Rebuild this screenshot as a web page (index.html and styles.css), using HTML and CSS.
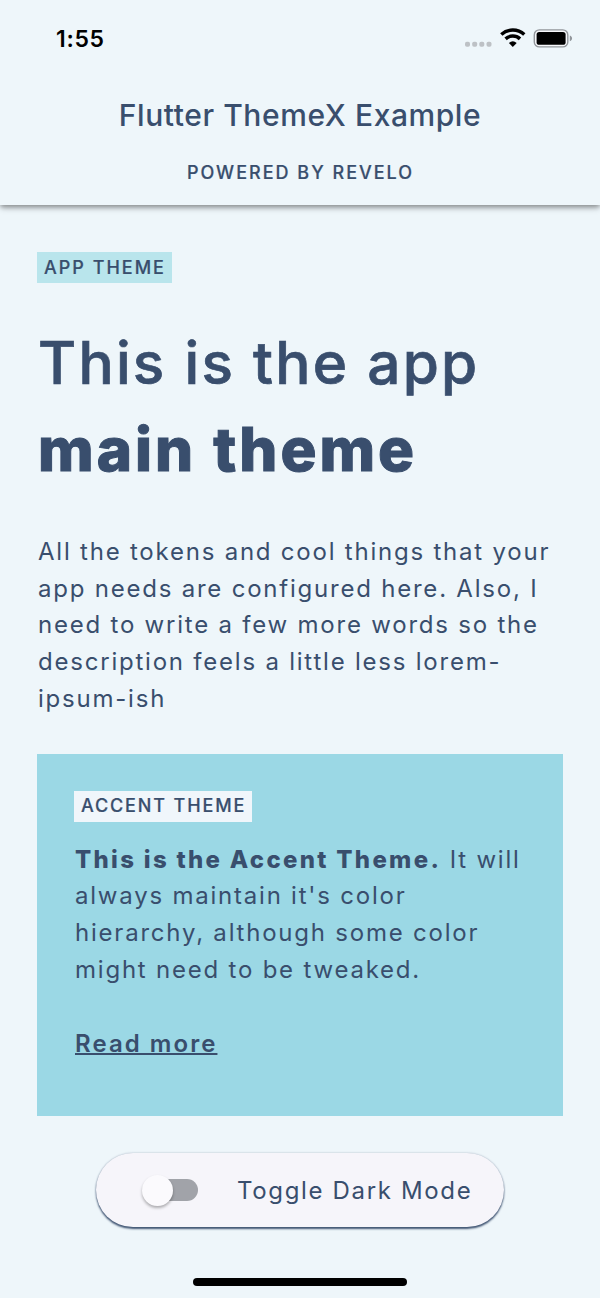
FILE: index.html
```html
<!DOCTYPE html>
<html lang="en">
<head>
<meta charset="utf-8">
<title>Flutter ThemeX Example</title>
<link rel="stylesheet" href="styles.css">
</head>
<body>
<div class="screen">
  <header class="app-bar">
    <div class="status-bar">
      <span class="time">1:55</span>
      <svg class="status-icons" width="110" height="24" viewBox="0 0 110 24">
        <g fill="#bdc1c5">
          <rect x="2" y="15.8" width="5" height="5" rx="1.8"/>
          <rect x="9.2" y="15.8" width="5" height="5" rx="1.8"/>
          <rect x="16.3" y="15.8" width="5" height="5" rx="1.8"/>
          <rect x="23.5" y="15.8" width="5" height="5" rx="1.8"/>
        </g>
        <g fill="none" stroke="#000" stroke-width="3.5">
          <path d="M38.3 8.5A17.2 17.2 0 0 1 61.3 8.5"/>
          <path d="M42.6 12.9A10.6 10.6 0 0 1 57 12.9"/>
        </g>
        <path d="M45.9 17A6 6 0 0 1 53.7 17L49.8 21Z"/>
        <rect x="71.3" y="3.9" width="33.5" height="17" rx="5" fill="#f7f8fb" stroke="#92969b" stroke-width="1.4"/>
        <rect x="73.6" y="6" width="29" height="12.8" rx="2.6"/>
        <path d="M106.8 9.5c3 1.2 3 4.6 0 5.8Z" fill="#92969b"/>
      </svg>
    </div>
    <h1 class="title">Flutter ThemeX Example</h1>
    <p class="subtitle">POWERED BY REVELO</p>
  </header>
  <main class="content">
    <span class="tag">APP THEME</span>
    <h2 class="headline">This is the app<br><strong>main theme</strong></h2>
    <p class="body-text">All the tokens and cool things that your<br>app needs are configured here. Also, I<br>need to write a few more words so the<br>description feels a little less lorem-<br>ipsum-ish</p>
    <section class="accent">
      <span class="tag tag-light">ACCENT THEME</span>
      <p class="body-text accent-text"><strong>This is the Accent Theme.</strong> It will<br>always maintain it's color<br>hierarchy, although some color<br>might need to be tweaked.</p>
      <a class="link">Read more</a>
    </section>
    <div class="toggle">
      <span class="switch"><span class="thumb"></span></span>
      <span class="toggle-label">Toggle Dark Mode</span>
    </div>
  </main>
  <div class="home-indicator"></div>
</div>
</body>
</html>
```

FILE: styles.css
```css
* { box-sizing: border-box; }
body {
  margin: 0;
  background: #eef6fa;
  color: #394e6d;
  font-family: Inter, "Liberation Sans", sans-serif;
}
h1, h2, p { margin: 0; font-weight: 400; }
.screen {
  width: 600px;
  height: 1298px;
  display: flex;
  flex-direction: column;
  align-items: stretch;
  overflow: hidden;
}
.app-bar {
  height: 205px;
  flex: none;
  background: #eef6fa;
  box-shadow: 0 4px 6px -1px rgba(0, 0, 0, .28), 0 2px 4px rgba(0, 0, 0, .2);
  text-align: center;
}
.status-bar {
  height: 77px;
  display: flex;
  justify-content: space-between;
  align-items: center;
  padding: 0 27px 0 56px;
}
.time {
  color: #000;
  font-size: 23px;
  font-weight: 600;
  letter-spacing: .7px;
}
.status-icons { display: block; margin-bottom: 2px; }
.title {
  margin-top: 19px;
  font-size: 30px;
  line-height: 38px;
  font-weight: 450;
  letter-spacing: .58px;
}
.subtitle {
  margin-top: 27px;
  padding-left: 1px;
  font-size: 18px;
  line-height: 24px;
  font-weight: 500;
  letter-spacing: 2px;
  -webkit-text-stroke: .2px currentColor;
}
.content {
  padding: 47px 37px 0;
  display: flex;
  flex-direction: column;
  align-items: flex-start;
}
.tag {
  display: block;
  height: 31px;
  padding: 0 6px 0 7px;
  background: #b9e5ec;
  font-size: 18px;
  line-height: 31px;
  font-weight: 500;
  letter-spacing: 2px;
  white-space: nowrap;
  -webkit-text-stroke: .2px currentColor;
}
.tag-light {
  background: #f0f6fb;
  line-height: 29px;
  letter-spacing: 1.87px;
}
.headline {
  margin-top: 36px;
  padding-left: 1px;
  font-size: 58.5px;
  line-height: 87px;
  font-weight: 500;
  letter-spacing: 2.25px;
  white-space: nowrap;
  -webkit-text-stroke: .7px currentColor;
}
.headline strong {
  font-size: 60px;
  line-height: 1;
  font-weight: 800;
  letter-spacing: 3px;
  word-spacing: 1px;
  -webkit-text-stroke-width: 1px;
}
.body-text {
  margin-top: 40.6px;
  padding-left: 1px;
  font-size: 24px;
  line-height: 36.9px;
  letter-spacing: 1.78px;
  white-space: nowrap;
}
.body-text strong { font-weight: 800; letter-spacing: 2.3px; }
.accent {
  width: 526px;
  height: 362.5px;
  margin-top: 35.4px;
  padding: 37px;
  background: #9bd8e5;
  display: flex;
  flex-direction: column;
  align-items: flex-start;
}
.accent-text { margin-top: 20px; }
.link {
  margin: 37px 0 0 1px;
  font-size: 24px;
  line-height: 36.9px;
  font-weight: 600;
  letter-spacing: 2.05px;
  text-decoration: underline;
  text-decoration-thickness: 2px;
}
.toggle {
  align-self: center;
  width: 408px;
  height: 74px;
  margin-top: 37px;
  padding-left: 48px;
  border-radius: 37px;
  background: #f6f5fa;
  box-shadow: 0 2px 2px rgba(57, 78, 109, .95), 0 0 2px rgba(57, 78, 109, .4);
  display: flex;
  align-items: center;
}
.switch {
  width: 54px;
  height: 22px;
  border-radius: 11px;
  background: #a1a3a9;
  display: flex;
  align-items: center;
}
.thumb {
  flex: none;
  width: 31px;
  height: 31px;
  margin-left: -2px;
  border-radius: 50%;
  background: #fbfafd;
  box-shadow: 0 2px 3px rgba(0, 0, 0, .3);
}
.toggle-label {
  margin-left: 39px;
  font-size: 24px;
  letter-spacing: 1.65px;
  white-space: nowrap;
}
.home-indicator {
  width: 214px;
  height: 8px;
  margin: auto auto 12px;
  border-radius: 4px;
  background: #000;
}
```
